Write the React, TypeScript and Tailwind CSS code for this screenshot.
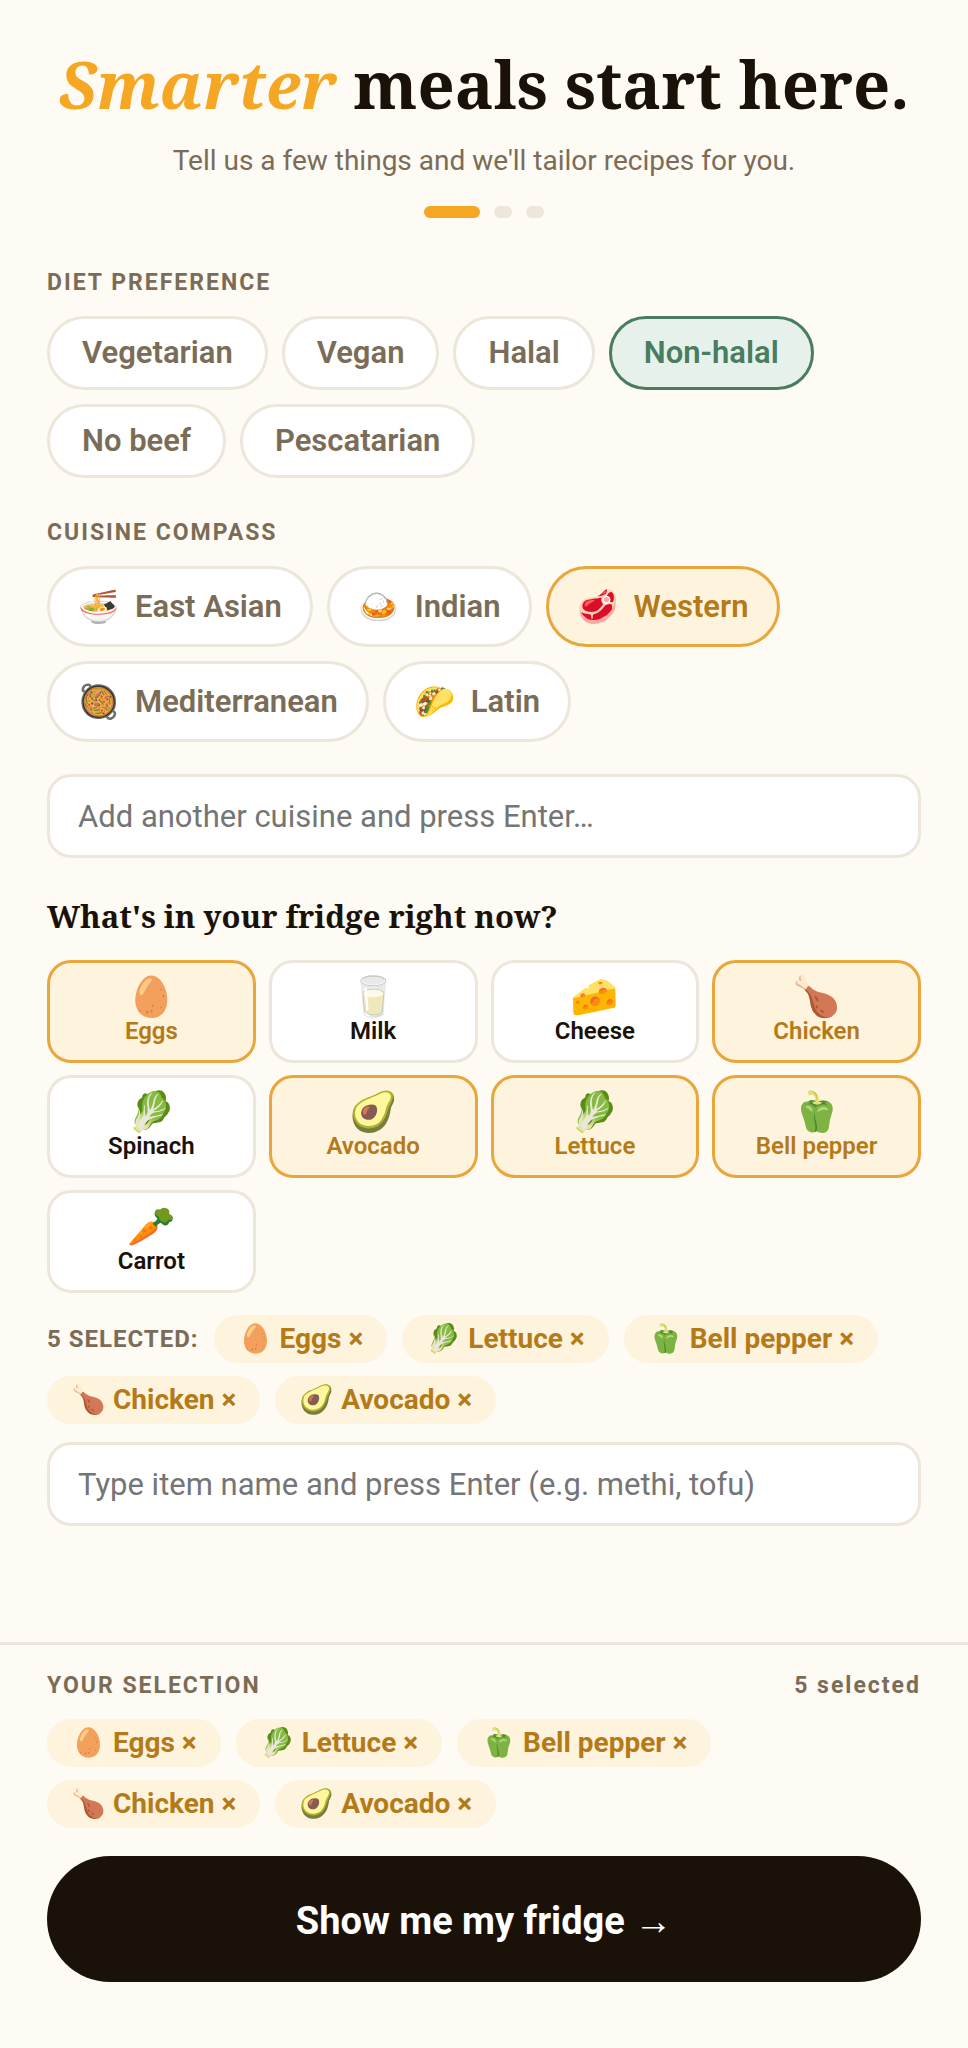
import { useState, type KeyboardEvent } from "react";
import { clsx } from "clsx";

const DIETS = ["Vegetarian", "Vegan", "Halal", "Non-halal", "No beef", "Pescatarian"];

const CUISINES = [
  { name: "East Asian", emoji: "🍜" },
  { name: "Indian", emoji: "🍛" },
  { name: "Western", emoji: "🥩" },
  { name: "Mediterranean", emoji: "🥘" },
  { name: "Latin", emoji: "🌮" },
];

const FOODS = [
  { name: "Eggs", emoji: "🥚" },
  { name: "Milk", emoji: "🥛" },
  { name: "Cheese", emoji: "🧀" },
  { name: "Chicken", emoji: "🍗" },
  { name: "Spinach", emoji: "🥬" },
  { name: "Avocado", emoji: "🥑" },
  { name: "Lettuce", emoji: "🥬" },
  { name: "Bell pepper", emoji: "🫑" },
  { name: "Carrot", emoji: "🥕" },
];

const LABEL = "text-[23px] leading-7 font-bold tracking-[2px] text-[#7a6c57]";
const IDLE = "border-[#ede6da] bg-white";
const AMBER = "border-[#e9a63a] bg-[#fef3dd] text-[#b57a18]";
const FIELD =
  "h-[84px] w-full rounded-3xl border-3 border-[#ede6da] bg-white px-7 text-[31px] text-[#1a1209] outline-none placeholder:text-[#757575] focus:border-[#e9a63a]";

function toggle(list: string[], name: string) {
  return list.includes(name) ? list.filter((n) => n !== name) : [...list, name];
}

function Pill({ name, onRemove }: { name: string; onRemove: () => void }) {
  const emoji = FOODS.find((f) => f.name === name)?.emoji ?? "🍽️";
  return (
    <button
      type="button"
      onClick={onRemove}
      className="flex h-12 items-center rounded-full bg-[#fef3dd] px-6 text-[28px] leading-8 font-bold whitespace-nowrap text-[#b57a18]"
    >
      {emoji} {name} ×
    </button>
  );
}

export default function App() {
  const [diet, setDiet] = useState(["Non-halal"]);
  const [cuisines, setCuisines] = useState(CUISINES);
  const [picked, setPicked] = useState(["Western"]);
  const [items, setItems] = useState(["Eggs", "Lettuce", "Bell pepper", "Chicken", "Avocado"]);

  const onEnter = (add: (value: string) => void) => (e: KeyboardEvent<HTMLInputElement>) => {
    const value = e.currentTarget.value.trim();
    if (e.key !== "Enter" || !value) return;
    add(value);
    e.currentTarget.value = "";
  };

  const pills = items.map((name) => (
    <Pill key={name} name={name} onRemove={() => setItems(toggle(items, name))} />
  ));

  return (
    <div className="flex min-h-screen flex-col bg-[#fefaf4] font-[Roboto,sans-serif] text-[#1a1209]">
      <main className="flex grow flex-col px-[47px] pt-[42px]">
        <header className="flex flex-col items-center text-center">
          <h1 className="font-['Noto_Serif',serif] text-[65px] leading-[84px] font-bold">
            <em className="text-[#f5a623]">Smarter</em> meals start here.
          </h1>
          <p className="mt-[17px] text-[28px] leading-9 text-[#7a6c57]">
            Tell us a few things and we'll tailor recipes for you.
          </p>
          <div className="mt-[27px] flex gap-3.5">
            <span className="h-3 w-14 rounded-full bg-[#f5a623]" />
            <span className="h-3 w-[18px] rounded-full bg-[#ede6da]" />
            <span className="h-3 w-[18px] rounded-full bg-[#ede6da]" />
          </div>
        </header>

        <section className="mt-[51px]">
          <h2 className={LABEL}>DIET PREFERENCE</h2>
          <div className="mt-[19px] flex flex-wrap gap-3.5">
            {DIETS.map((name) => {
              const on = diet.includes(name);
              return (
                <button
                  key={name}
                  type="button"
                  aria-pressed={on}
                  onClick={() => setDiet(toggle(diet, name))}
                  className={clsx(
                    "h-[74px] rounded-full border-3 px-8 text-[31px] leading-9 font-semibold",
                    on ? "border-[#4a7c5f] bg-[#e7f1eb] text-[#4a7c5f]" : [IDLE, "text-[#7a6c57]"],
                  )}
                >
                  {name}
                </button>
              );
            })}
          </div>
        </section>

        <section className="mt-[41px]">
          <h2 className={LABEL}>CUISINE COMPASS</h2>
          <div className="mt-[19px] flex flex-wrap gap-3.5">
            {cuisines.map(({ name, emoji }) => {
              const on = picked.includes(name);
              return (
                <button
                  key={name}
                  type="button"
                  aria-pressed={on}
                  onClick={() => setPicked(toggle(picked, name))}
                  className={clsx(
                    "flex h-[81px] items-center gap-4 rounded-full border-3 px-7 text-[31px] leading-9 font-semibold",
                    on ? AMBER : [IDLE, "text-[#7a6c57]"],
                  )}
                >
                  <span className="text-[33px]">{emoji}</span>
                  {name}
                </button>
              );
            })}
          </div>
          <input
            type="text"
            aria-label="Add another cuisine"
            placeholder="Add another cuisine and press Enter…"
            onKeyDown={onEnter((name) => {
              setCuisines([...cuisines, { name, emoji: "🍽️" }]);
              setPicked([...picked, name]);
            })}
            className={clsx(FIELD, "mt-8")}
          />
        </section>

        <section className="mt-[38px]">
          <h2 className="font-['Noto_Serif',serif] text-[31px] leading-10 font-bold">
            What's in your fridge right now?
          </h2>
          <div className="mt-6 grid grid-cols-4 gap-x-[13px] gap-y-3">
            {FOODS.map(({ name, emoji }) => {
              const on = items.includes(name);
              return (
                <button
                  key={name}
                  type="button"
                  aria-pressed={on}
                  onClick={() => setItems(toggle(items, name))}
                  className={clsx(
                    "flex h-[103px] flex-col items-center justify-center rounded-3xl border-3 pb-0.5 text-2xl leading-7 font-semibold",
                    on ? AMBER : IDLE,
                  )}
                >
                  <span className="text-[39px] leading-10">{emoji}</span>
                  {name}
                </button>
              );
            })}
          </div>
          <div className="mt-[22px] flex flex-wrap items-center gap-x-[15px] gap-y-[13px]">
            <span className="text-2xl leading-7 font-bold tracking-[1px] text-[#7a6c57]">
              {items.length} SELECTED:
            </span>
            {pills}
          </div>
          <input
            type="text"
            aria-label="Add an item"
            placeholder="Type item name and press Enter (e.g. methi, tofu)"
            onKeyDown={onEnter((name) => !items.includes(name) && setItems([...items, name]))}
            className={clsx(FIELD, "mt-[18px]")}
          />
        </section>
      </main>

      <footer className="mt-16 border-t-3 border-[#ede6da] px-[47px] pt-[27px] pb-[66px]">
        <div className={clsx("flex justify-between", LABEL)}>
          <h2>YOUR SELECTION</h2>
          <span>{items.length} selected</span>
        </div>
        <div className="mt-[19px] flex flex-wrap gap-x-[15px] gap-y-[13px] pr-40">{pills}</div>
        <button
          type="button"
          className="mt-7 h-[126px] w-full rounded-full bg-[#1a1209] pt-1 text-[38px] font-bold text-white"
        >
          Show me my fridge →
        </button>
      </footer>
    </div>
  );
}
